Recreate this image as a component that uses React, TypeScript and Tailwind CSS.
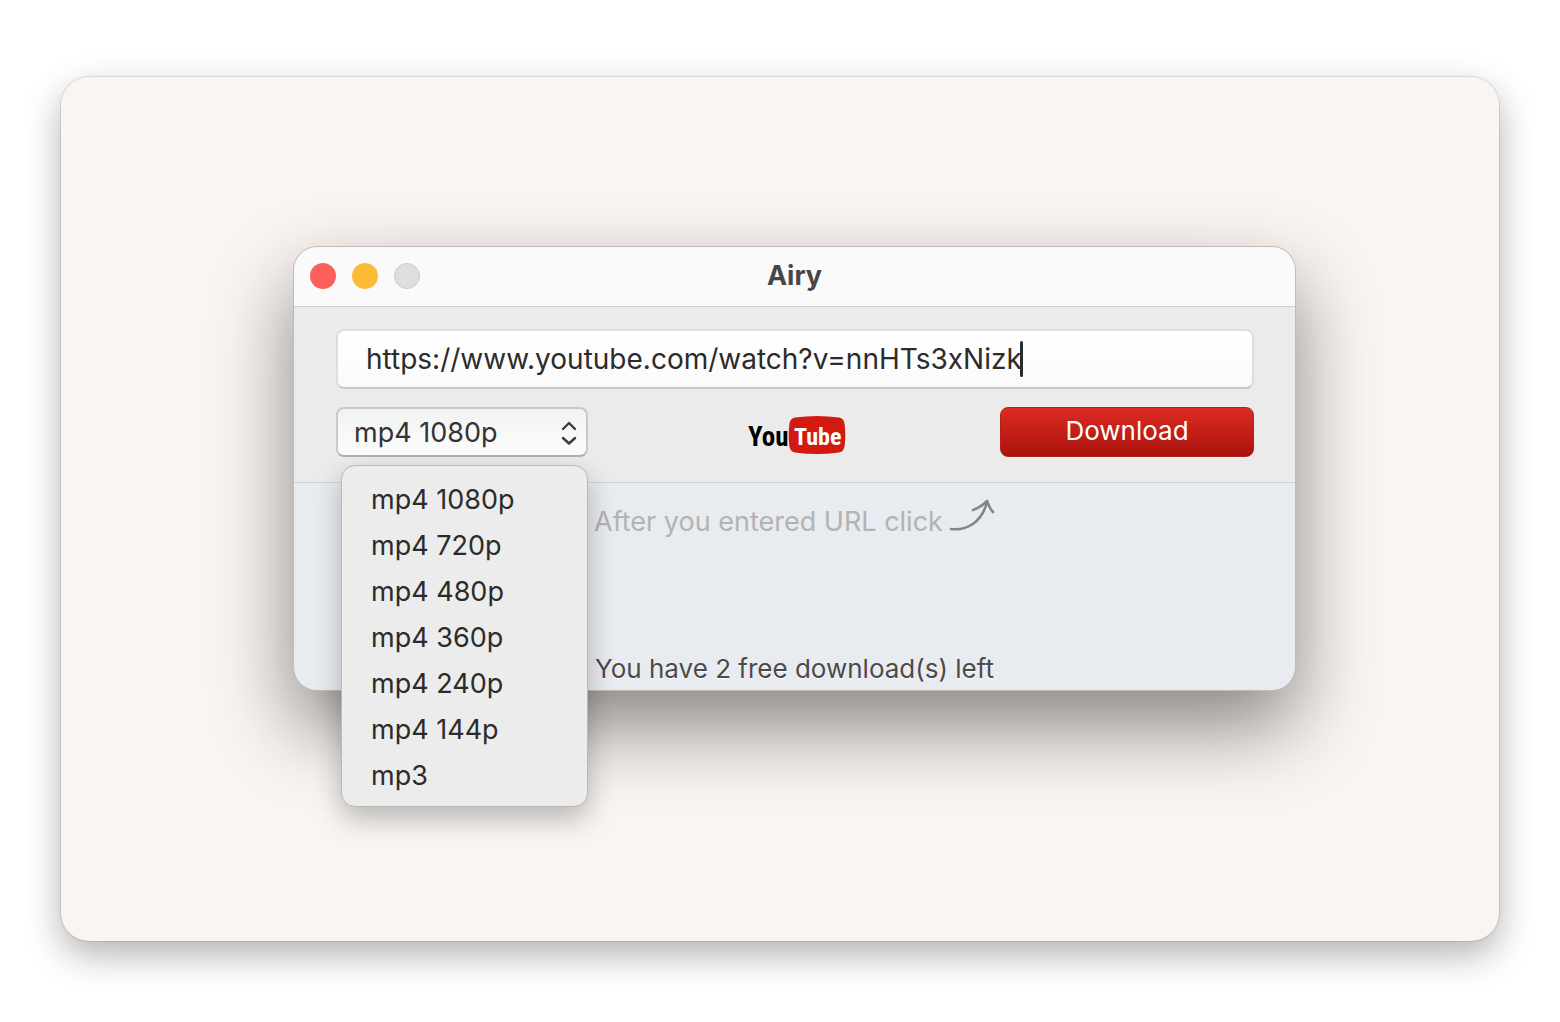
import * as React from 'react';

const FORMATS = ['mp4 1080p', 'mp4 720p', 'mp4 480p', 'mp4 360p', 'mp4 240p', 'mp4 144p', 'mp3'];

const TitleBar: React.FC = () => (
    <header className="grid grid-cols-3 items-center h-[60px] px-4 pb-0.5 rounded-t-3xl bg-[#fafafa] border-b border-[#cfcfcf]">
        <div className="flex items-center gap-4">
            <button type="button" aria-label="Close" className="size-[26px] rounded-full bg-[#fc605b]" />
            <button type="button" aria-label="Minimize" className="size-[26px] rounded-full bg-[#fabc36]" />
            <button type="button" aria-label="Zoom" disabled className="size-[26px] rounded-full bg-[#dedede] border border-[#cacaca]" />
        </div>
        <h1 className="text-center text-[27px] leading-8 font-bold text-[#464646]">Airy</h1>
    </header>
);

const YouTubeLogo: React.FC = () => (
    <svg viewBox="0 0 98 40" className="w-[98px] h-10" role="img" aria-label="YouTube">
        <path d="M47 2.6 Q69 -0.6 91 2.6 Q96 3.4 96.6 9 Q98 20 96.6 31 Q96 36.6 91 37.4 Q69 40.4 47 37.4 Q42 36.6 41.4 31 Q40 20 41.4 9 Q42 3.4 47 2.6Z" fill="#d31a11" />
        <text x="0" y="31" fontSize="27" fontWeight="700" fill="#000" fontFamily="'Roboto Condensed', 'Open Sans Condensed', Roboto, sans-serif">You</text>
        <text x="46" y="30" fontSize="24" fontWeight="700" fill="#fff" fontFamily="'Roboto Condensed', 'Open Sans Condensed', Roboto, sans-serif">Tube</text>
    </svg>
);

const Chevrons: React.FC = () => (
    <svg viewBox="0 0 16 24" className="absolute right-[11px] top-[14px] w-4 h-6 pointer-events-none" fill="none" stroke="#3c3c3c" strokeWidth="2.4" strokeLinecap="round" strokeLinejoin="round">
        <path d="M2 8 8 2 14 8" />
        <path d="M2 17 8 22.5 14 17" />
    </svg>
);

const HintArrow: React.FC = () => (
    <svg viewBox="0 0 46 34" className="w-[46px] h-[34px]" fill="none" stroke="#858585" strokeWidth="2.6" strokeLinecap="round" strokeLinejoin="round">
        <path d="M2 31 C18 33 33 24 38 4" />
        <path d="M24 12 C30 10 34 7 38 3 C40 8 41 11 44 14" />
    </svg>
);

const App: React.FC = () => {
    const [url, setUrl] = React.useState('https://www.youtube.com/watch?v=nnHTs3xNizk');
    const [format, setFormat] = React.useState(FORMATS[0]);

    return (
        <div className="min-h-screen bg-white px-[61px] pt-[77px] pb-[81px] font-['Inter',sans-serif]">
            <main className="rounded-[28px] bg-[#faf5f1] pl-[232px] pr-[203px] pt-[169px] pb-[250px] shadow-[0_0_0_1px_rgba(0,0,0,0.1),0_14px_36px_rgba(0,0,0,0.3)]">
                <section className="rounded-3xl bg-[#e8ebf0] border border-[#bdbcba] shadow-[0_36px_80px_rgba(0,0,0,0.46)]">
                    <TitleBar />

                    <div className="bg-[#ebebeb] border-b border-[#cfcfcf] pl-[42px] pr-[41px] pt-[22px] pb-[25px]">
                        <div className="flex items-center h-[60px] pl-7 rounded-lg border-2 border-[#dddddd] border-b-[#c9c9c9] bg-linear-to-b from-white to-[#fafafa]">
                            <input
                                type="text"
                                aria-label="Video URL"
                                value={url}
                                onChange={(e) => setUrl(e.target.value)}
                                className="field-sizing-content text-[28px] leading-9 text-[#2b2b2b] outline-none"
                            />
                            <span className="-ml-0.5 w-[3px] h-9 rounded-full bg-[#2b2b2b]" />
                        </div>

                        <div className="grid grid-cols-[252px_1fr_254px] items-center mt-[18px]">
                            <div className="relative">
                                <select
                                    aria-label="Format"
                                    value={format}
                                    onChange={(e) => setFormat(e.target.value)}
                                    className="appearance-none block w-full h-[50px] pl-4 pt-0.5 rounded-lg border-2 border-[#c9c9c9] border-b-[#b0b0b0] bg-linear-to-b from-[#f1f3f2] to-[#fcfcfc] text-[27px] text-[#333333]"
                                >
                                    {FORMATS.map((f) => (
                                        <option key={f} value={f}>{f}</option>
                                    ))}
                                </select>
                                <Chevrons />

                                <ul className="absolute z-10 left-[5px] top-[58px] w-[247px] pt-[11px] pb-[7px] rounded-[14px] bg-[#ececec] border border-[#b9b9b9] shadow-[0_12px_28px_rgba(0,0,0,0.26)]">
                                    {FORMATS.map((f) => (
                                        <li key={f}>
                                            <button
                                                type="button"
                                                onClick={() => setFormat(f)}
                                                className="block w-full h-[46px] px-[29px] text-left text-[27px] leading-[46px] text-[#2b2b2b]"
                                            >
                                                {f}
                                            </button>
                                        </li>
                                    ))}
                                </ul>
                            </div>

                            <div className="flex justify-center pl-1.5 pt-1.5">
                                <YouTubeLogo />
                            </div>

                            <button
                                type="button"
                                className="h-[50px] pb-1 rounded-lg border border-[#b3231d] bg-linear-to-b from-[#dc2b22] to-[#ab120d] text-[26px] text-white"
                            >
                                Download
                            </button>
                        </div>
                    </div>

                    <div className="flex flex-col items-center justify-between h-[207px] pt-[15px] pb-[5px]">
                        <div className="flex gap-1.5">
                            <p className="pt-2 text-[27px] leading-8 text-[#b3b3b3]">After you entered URL click</p>
                            <HintArrow />
                        </div>
                        <p className="text-[26px] leading-8 text-[#4a4a4a] text-shadow-[0_1px_1px_white]">You have 2 free download(s) left</p>
                    </div>
                </section>
            </main>
        </div>
    );
};

export default App;
